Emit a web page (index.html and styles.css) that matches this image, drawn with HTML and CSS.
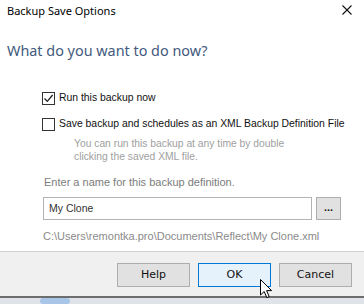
FILE: index.html
```html
<!DOCTYPE html>
<html>
<head>
<meta charset="utf-8">
<link rel="stylesheet" href="styles.css">
</head>
<body>
<div class="window">
  <div class="titlebar">
    <span class="title">Backup Save Options</span>
    <svg class="close" width="10" height="10" viewBox="0 0 10 10"><path d="M0.5 0.5 L9.5 9.5 M9.5 0.5 L0.5 9.5" stroke="#111" stroke-width="1.1" fill="none"/></svg>
  </div>
  <div class="content">
    <h1 class="instr">What do you want to do now?</h1>
    <div class="options">
      <div class="check">
        <span class="box"><svg width="11" height="11" viewBox="0 0 11 11"><path d="M1.5 5.5 L4.3 8.4 L9.6 2" stroke="#222" stroke-width="1.3" fill="none"/></svg></span>
        <span>Run this backup now</span>
      </div>
      <div class="check second">
        <span class="box"></span>
        <span>Save backup and schedules as an XML Backup Definition File</span>
      </div>
      <p class="hint">You can run this backup at any time by double<br>clicking the saved XML file.</p>
    </div>
    <p class="prompt">Enter a name for this backup definition.</p>
    <div class="namerow">
      <div class="input">My Clone</div>
      <div class="browse">...</div>
    </div>
    <p class="path">C:\Users\remontka.pro\Documents\Reflect\My Clone.xml</p>
  </div>
  <div class="footer">
    <div class="btn">Help</div>
    <div class="btn default">OK</div>
    <div class="btn">Cancel</div>
  </div>
  <div class="taskbar"><span class="glow"></span></div>
  <svg class="cursor" width="13" height="20" viewBox="0 0 13 20"><path d="M0.5 0.5 L0.5 16 L4.2 12.5 L6.8 18.6 L9.2 17.6 L6.6 11.6 L11.6 11.6 Z" fill="#fff" stroke="#000" stroke-width="1" stroke-linejoin="round"/></svg>
</div>
</body>
</html>
```
FILE: styles.css
```css
* { box-sizing: border-box; }
html, body { margin: 0; padding: 0; }
body {
  width: 364px;
  height: 304px;
  overflow: hidden;
  background: #fff;
  font-family: "Liberation Sans", Arial, sans-serif;
  font-size: 11px;
  color: #111;
}
.window {
  position: relative;
  width: 364px;
  height: 304px;
  display: flex;
  flex-direction: column;
}
.titlebar {
  height: 20px;
  display: flex;
  align-items: center;
  justify-content: space-between;
  padding: 0 12px 0 7px;
}
.title {
  font-family: "Noto Sans", "Open Sans", sans-serif;
  font-size: 11px;
  color: #000;
}
.close { margin-top: -1px; }
.content {
  height: 231px;
  padding: 0 0 0 7px;
}
.instr {
  margin: 20px 0 0 0;
  font-family: "Noto Sans", "Open Sans", sans-serif;
  font-weight: 400;
  font-size: 14.4px;
  line-height: 22px;
  color: #435a7d;
}
.options {
  margin: 29px 0 0 35px;
  font-size: 10.4px;
}
.check {
  display: flex;
  align-items: center;
  gap: 4px;
  height: 14px;
  line-height: 14px;
  color: #111;
}
.check.second { margin-top: 12px; }
.box {
  width: 13px;
  height: 13px;
  border: 1px solid #333;
  background: #fff;
  display: flex;
  align-items: center;
  justify-content: center;
}
.hint {
  margin: 6px 0 0 32px;
  line-height: 13px;
  font-size: 10.3px;
  color: #a0a0a0;
}
.prompt {
  margin: 12px 0 0 37px;
  line-height: 14px;
  color: #7c7c7c;
}
.namerow {
  margin: 8px 0 0 36px;
  display: flex;
  gap: 4px;
  height: 23px;
}
.input {
  width: 269px;
  border: 1px solid #b4b4b4;
  padding: 0 0 0 5px;
  line-height: 21px;
  font-size: 10.5px;
  color: #333;
}
.browse {
  width: 25px;
  border: 1px solid #adadad;
  background: #e1e1e1;
  text-align: center;
  line-height: 19px;
  color: #222;
  font-weight: 700;
}
.path {
  margin: 9px 0 0 36px;
  line-height: 14px;
  color: #8a8a8a;
}
.footer {
  height: 45px;
  background: #f0f0f0;
  border-top: 1px solid #d2d2d2;
  display: flex;
  justify-content: flex-end;
  align-items: flex-start;
  gap: 8px;
  padding: 11px 12px 0 0;
}
.btn {
  width: 73px;
  height: 24px;
  border: 1px solid #adadad;
  background: #e1e1e1;
  text-align: center;
  line-height: 22px;
  color: #111;
  font-family: "DejaVu Sans", sans-serif;
  font-size: 11px;
}
.btn.default {
  border-color: #0078d7;
  background: #e5f1fb;
}
.taskbar {
  flex: 1;
  border-top: 2px solid #6d6d6d;
  background: #dfe3e8;
  position: relative;
}
.glow {
  position: absolute;
  left: 40px;
  top: 0;
  width: 30px;
  height: 6px;
  background: #a9c6e8;
  border-radius: 3px;
}
.cursor {
  position: absolute;
  left: 260px;
  top: 279px;
}
```
